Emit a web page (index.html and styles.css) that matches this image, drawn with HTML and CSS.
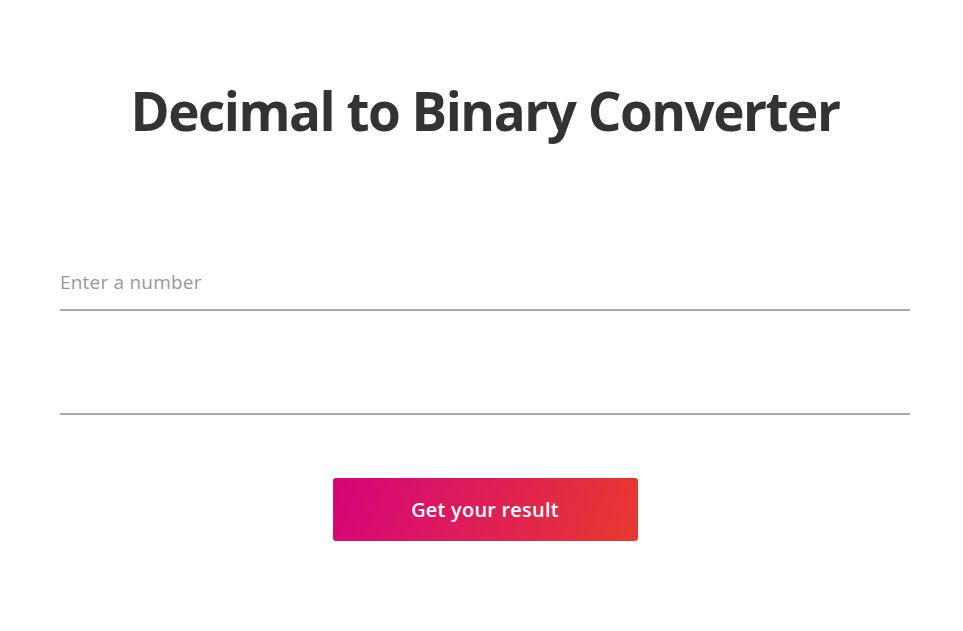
FILE: index.html
```html
<!DOCTYPE html>
<html>
<head>
<meta charset="utf-8">
<link rel="stylesheet" href="styles.css">
</head>
<body>
<main class="wrap">
  <h1 class="title">Decimal to Binary Converter</h1>
  <form class="form" onsubmit="return false">
    <input class="field" type="text" placeholder="Enter a number">
    <div class="field result"></div>
    <div class="actions">
      <button class="btn" type="submit">Get your result</button>
    </div>
  </form>
</main>
</body>
</html>
```

FILE: styles.css
```css
html, body {
  margin: 0;
  padding: 0;
  background: #fff;
}
body {
  font-family: "Open Sans", "Noto Sans", sans-serif;
  color: #333;
}
.wrap {
  width: 850px;
  margin-left: 60px;
  padding-top: 78px;
}
.title {
  margin: 0;
  text-align: center;
  font-size: 53px;
  line-height: 66px;
  font-weight: 700;
  color: #333;
  letter-spacing: -1.5px;
}
.form {
  display: flex;
  flex-direction: column;
  margin-top: 111px;
}
.field {
  display: block;
  box-sizing: border-box;
  width: 100%;
  height: 56px;
  border: none;
  border-bottom: 2px solid #aaa;
  padding: 0;
  font-family: inherit;
  font-size: 19px;
  letter-spacing: 0.2px;
  color: #333;
  background: transparent;
  outline: none;
}
.field::placeholder {
  color: #999;
}
.result {
  margin-top: 48px;
}
.actions {
  display: flex;
  justify-content: center;
  margin-top: 63px;
}
.btn {
  width: 305px;
  height: 63px;
  border: none;
  border-radius: 3px;
  background: linear-gradient(110deg, #d5047b 0%, #e8392f 100%);
  color: #fff;
  font-family: inherit;
  font-size: 20px;
  font-weight: 600;
  letter-spacing: 0.2px;
}
```
